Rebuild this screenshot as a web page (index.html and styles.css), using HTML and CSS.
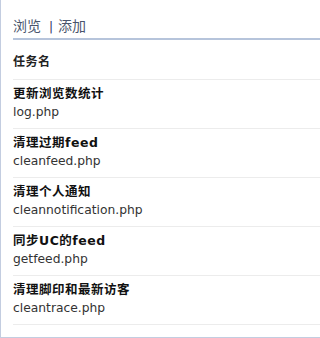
FILE: index.html
```html
<!DOCTYPE html>
<html lang="zh">
<head>
<meta charset="utf-8">
<link rel="stylesheet" href="styles.css">
</head>
<body>
<div class="panel">
  <div class="nav">
    <a class="tab">浏览</a><span class="sep">|</span><a class="tab">添加</a>
  </div>
  <div class="head">任务名</div>
  <div class="row"><div class="title">更新浏览数统计</div><div class="file">log.php</div></div>
  <div class="row"><div class="title">清理过期feed</div><div class="file">cleanfeed.php</div></div>
  <div class="row"><div class="title">清理个人通知</div><div class="file">cleannotification.php</div></div>
  <div class="row"><div class="title">同步UC的feed</div><div class="file">getfeed.php</div></div>
  <div class="row"><div class="title">清理脚印和最新访客</div><div class="file">cleantrace.php</div></div>
</div>
</body>
</html>
```
FILE: styles.css
```css
html, body {
  margin: 0;
  padding: 0;
  background: #fff;
}
.panel {
  box-sizing: border-box;
  height: 338px;
  border-left: 1px solid #c3cde0;
  border-bottom: 1px solid #c3cde0;
  padding-left: 12px;
  font-family: "DejaVu Sans", "Noto Sans CJK SC", sans-serif;
}
.nav {
  display: flex;
  align-items: baseline;
  padding-top: 14px;
  height: 24px;
  line-height: 22px;
  border-bottom: 2px solid #b6c4db;
  font-family: "Noto Sans CJK SC", sans-serif;
  font-size: 14px;
}
.tab {
  color: #4a556c;
}
.sep {
  color: #2a2a60;
  font-family: "DejaVu Sans", sans-serif;
  font-size: 12px;
  padding: 0 5px 0 8px;
}
.head {
  padding: 14px 0 9px;
  line-height: 16px;
  font-size: 12px;
  font-weight: bold;
  color: #222;
  letter-spacing: 0.5px;
  border-bottom: 1px solid #ececec;
}
.row {
  padding: 5px 0 7px;
  border-bottom: 1px solid #ececec;
}
.title {
  line-height: 18px;
  font-size: 12.5px;
  font-weight: bold;
  color: #111;
  letter-spacing: 0.5px;
}
.file {
  line-height: 18px;
  font-size: 12.3px;
  color: #333;
}
```
